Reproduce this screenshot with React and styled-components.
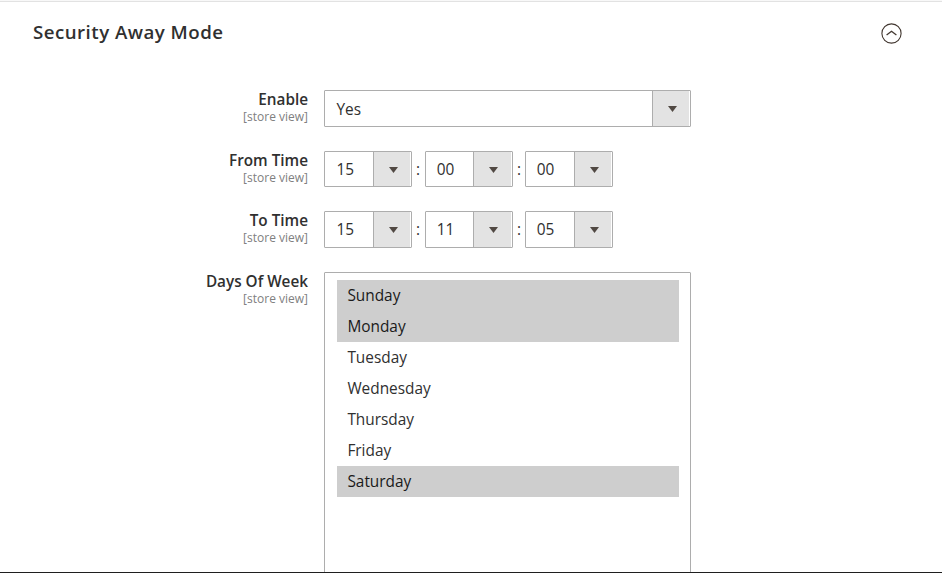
import React from "react";
import styled, { createGlobalStyle } from "styled-components";

const GlobalStyle = createGlobalStyle`
  * {
    box-sizing: border-box;
  }
  body {
    margin: 0;
    background: #fff;
    color: #303030;
    font-family: "Open Sans", "Noto Sans", sans-serif;
    font-size: 15.4px;
  }
`;
const Section = styled.section`
  height: 573px;
  overflow: hidden;
  display: flex;
  flex-direction: column;
  border-top: 1px solid #f8f8f8;
  border-bottom: 1px solid #1f1f1f;
`;
const Header = styled.header`
  flex: none;
  height: 89px;
  padding: 17px 40px 0 33px;
  display: flex;
  justify-content: space-between;
  align-items: flex-start;
  border-top: 1px solid #e2e2e2;
`;
const Title = styled.h2`
  margin: 0;
  font-size: 18.7px;
  line-height: 26px;
  font-weight: 600;
  letter-spacing: 0.47px;
`;
const CollapseButton = styled.button`
  margin-top: 4px;
  padding: 0;
  border: 0;
  background: none;
  color: #41362f;
  line-height: 0;
`;
const Row = styled.div`
  flex: none;
  height: ${(props) => props.$height}px;
  display: flex;
  align-items: flex-start;
`;
const Label = styled.div`
  width: 308px;
  margin-right: 16px;
  text-align: right;
  font-size: 15.3px;
  font-weight: 600;
  line-height: 19px;
`;
const Scope = styled.span`
  display: block;
  color: #808080;
  font-size: 12px;
  font-weight: 400;
  line-height: 16px;
`;
const SelectBox = styled.div`
  width: ${(props) => props.$width}px;
  height: ${(props) => props.$height}px;
  display: flex;
  border: 1px solid #adadad;
  border-radius: 1px;
  padding-right: 1px;
`;
const Value = styled.span`
  flex: 1;
  padding-left: ${(props) => props.$indent}px;
  line-height: ${(props) => props.$lineHeight}px;
`;
const Arrow = styled.span`
  width: ${(props) => props.$width}px;
  padding: 15px 0 0 15px;
  line-height: 0;
  border-left: 1px solid #adadad;
  background: #e3e3e3;
`;
const Colon = styled.span`
  width: ${(props) => props.$width}px;
  padding-left: 4px;
  line-height: 38px;
`;
const DayList = styled.ul`
  width: 367px;
  height: 340px;
  margin: 0;
  padding: 7px 11px 0 12px;
  list-style: none;
  border: 1px solid #adadad;
  border-radius: 1px;
`;
const Day = styled.li`
  height: 31px;
  padding-left: 10.4px;
  line-height: 31px;
  color: ${(props) => (props.$selected ? "#1a1a1a" : "#303030")};
  background: ${(props) => (props.$selected ? "#cecece" : "transparent")};
`;

const days = [
  { name: "Sunday", selected: true },
  { name: "Monday", selected: true },
  { name: "Tuesday" },
  { name: "Wednesday" },
  { name: "Thursday" },
  { name: "Friday" },
  { name: "Saturday", selected: true },
];

function Select({ value, width = 88, height = 37, arrowWidth = 37, indent = 11.5, lineHeight = 35 }) {
  return (
    <SelectBox $width={width} $height={height}>
      <Value $indent={indent} $lineHeight={lineHeight}>
        {value}
      </Value>
      <Arrow $width={arrowWidth}>
        <svg width="9" height="6" viewBox="0 0 9 6">
          <path d="M0 0h9L4.5 6z" fill="#514943" />
        </svg>
      </Arrow>
    </SelectBox>
  );
}

function Field({ label, height, children }) {
  return (
    <Row $height={height}>
      <Label>
        {label}
        <Scope>[store view]</Scope>
      </Label>
      {children}
    </Row>
  );
}

function Time({ parts, height }) {
  return (
    <>
      <Select value={parts[0]} height={height} />
      <Colon $width={13}>:</Colon>
      <Select value={parts[1]} height={height} arrowWidth={38} indent={10.7} />
      <Colon $width={12}>:</Colon>
      <Select value={parts[2]} height={height} indent={10.7} />
    </>
  );
}

function App() {
  return (
    <>
      <GlobalStyle />
      <Section>
        <Header>
          <Title>Security Away Mode</Title>
          <CollapseButton aria-label="Collapse">
            <svg width="21" height="21" viewBox="0 0 21 21" fill="none" stroke="currentColor">
              <circle cx="10.5" cy="10.5" r="9.6" strokeWidth="1.1" />
              <path d="M5.6 12l4.9-3.7 4.9 3.7" strokeWidth="1.3" />
            </svg>
          </CollapseButton>
        </Header>
        <Field label="Enable" height={61}>
          <Select value="Yes" width={367} lineHeight={37} />
        </Field>
        <Field label="From Time" height={60}>
          <Time parts={["15", "00", "00"]} height={36} />
        </Field>
        <Field label="To Time" height={61}>
          <Time parts={["15", "11", "05"]} height={37} />
        </Field>
        <Field label="Days Of Week" height={340}>
          <DayList>
            {days.map((day) => (
              <Day key={day.name} $selected={day.selected}>
                {day.name}
              </Day>
            ))}
          </DayList>
        </Field>
      </Section>
    </>
  );
}

export default App;
